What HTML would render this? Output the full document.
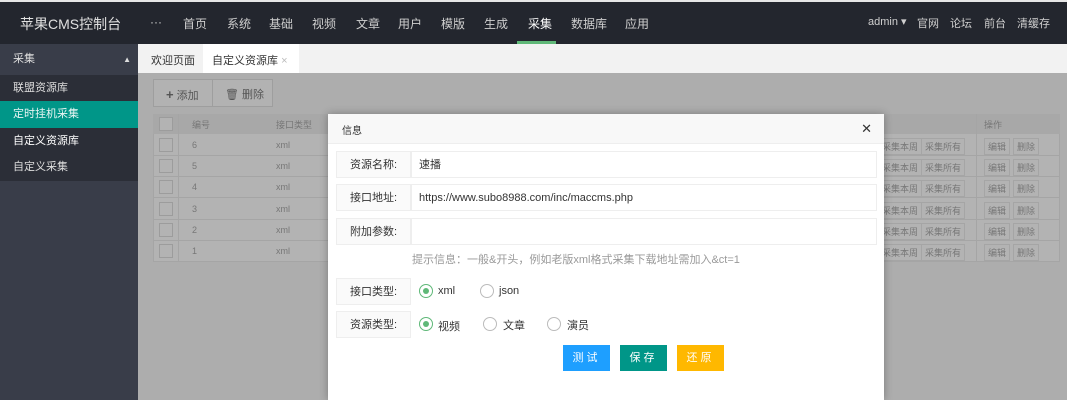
<!DOCTYPE html>
<html><head><meta charset="utf-8"><style>
*{margin:0;padding:0;box-sizing:border-box}
body{width:1067px;height:400px;overflow:hidden;position:relative;font-family:"Liberation Sans","Noto Sans CJK SC",sans-serif;font-size:12px;background:#adadad}
.abs{position:absolute}
.top{left:0;top:0;width:1067px;height:44px;background:#23262e;border-top:2px solid #e6e6e6;color:#ddd}
.top span{position:absolute;top:13px;font-size:12px;color:#cfcfcf;white-space:nowrap}
.side{left:0;top:44px;width:138px;height:356px;background:#393d49}
.si{position:absolute;left:0;width:138px;height:26.5px;line-height:26px;padding-left:13px;color:#ddd;font-size:11px;background:#2b2e37}
.tabs{left:138px;top:44px;width:929px;height:29px;background:#f2f2f2}
.cell{position:absolute;color:#777;font-size:9px}
.dlg{left:328px;top:114px;width:556px;height:286px;background:#fff;box-shadow:0 0 8px rgba(0,0,0,.3)}
.lab{position:absolute;left:8px;width:75px;height:27px;border:1px solid #eee;background:#fafafa;text-align:center;line-height:26px;color:#333;font-size:11px}
.inp{position:absolute;left:83px;width:466px;height:27px;border:1px solid #eee;line-height:26px;padding-left:7px;color:#333;font-size:11px}
.rad{position:absolute;width:14px;height:14px;border:1px solid #bbb;border-radius:50%}
.rad.on{border-color:#5fb878}
.rad.on:after{content:"";position:absolute;left:3px;top:3px;width:6px;height:6px;border-radius:50%;background:#5fb878}
.btn{position:absolute;top:231px;width:47px;height:26px;color:#fff;text-align:center;line-height:26px;letter-spacing:3px;font-size:11px}
.t{position:absolute;color:#333;font-size:11px}
</style></head><body>
<div class="abs top">
<span style="left:20px;font-size:14px;top:12px;color:#e0e0e0">苹果CMS控制台</span>
<span style="left:150px">···</span>
<span style="left:183px">首页</span><span style="left:227px">系统</span><span style="left:269px">基础</span><span style="left:312px">视频</span><span style="left:356px">文章</span><span style="left:398px">用户</span><span style="left:441px">模版</span><span style="left:484px">生成</span><span style="left:528px;color:#fff">采集</span><span style="left:571px">数据库</span><span style="left:625px">应用</span>
<div class="abs" style="left:517px;top:39px;width:39px;height:3px;background:#5fb878"></div>
<span style="left:868px;font-size:11px">admin ▾</span><span style="left:917px;font-size:11px">官网</span><span style="left:950px;font-size:11px">论坛</span><span style="left:984px;font-size:11px">前台</span><span style="left:1017px;font-size:11px">清缓存</span>
</div>
<div class="abs side">
<div class="si" style="top:0;height:31px;line-height:31px;background:#393d49">采集<span style="position:absolute;right:7px;font-size:8px">▲</span></div>
<div class="si" style="top:31px">联盟资源库</div>
<div class="si" style="top:57px;background:#009688;color:#e8f5f3">定时挂机采集</div>
<div class="si" style="top:84px;color:#fff">自定义资源库</div>
<div class="si" style="top:110px">自定义采集</div>
</div>
<div class="abs tabs"><span class="abs" style="left:13px;top:8px;font-size:11px;color:#333">欢迎页面</span>
<div class="abs" style="left:65px;top:0;width:96px;height:29px;background:#fff"><span class="abs" style="left:9px;top:8px;font-size:11px;color:#333">自定义资源库 <span style="color:#bbb">×</span></span></div></div>
<div class="abs" style="left:145px;top:73px;width:922px;height:327px;background:#adadad"></div>
<div class="abs" style="left:153px;top:79px;width:120px;height:28px;border:1px solid #9e9e9e;background:#b2b2b2;color:#555;font-size:11px"><span class="abs" style="left:12px;top:7px"><b style="font-size:13px">+</b> 添加</span><span class="abs" style="left:58px;top:0;height:26px;border-left:1px solid #9e9e9e;padding:6px 0 0 12px">🗑 删除</span></div>
<div class="abs" style="left:153px;top:114px;width:907px;height:148px;border:1px solid #a5a5a5;background:#b3b3b3"></div>
<div class="abs" style="left:153px;top:114px;width:907px;height:20px;background:#a8a8a8"></div>
<div class="cell" style="left:192px;top:118px">编号</div><div class="cell" style="left:276px;top:118px">接口类型</div><div class="cell" style="left:984px;top:118px">操作</div>
<div class="abs" style="left:178px;top:114px;width:1px;height:148px;background:#a5a5a5"></div>
<div class="abs" style="left:976px;top:114px;width:1px;height:148px;background:#a5a5a5"></div>
<div class="abs" style="left:159px;top:117px;width:14px;height:14px;border:1px solid #9c9c9c;background:#b3b3b3"></div>
<div id="rows"></div>
<script>
var h='';for(var i=0;i<6;i++){var y=135+i*21.2;h+='<div class="abs" style="left:153px;top:'+(y+20)+'px;width:907px;height:1px;background:#a5a5a5"></div><div class="abs" style="left:159px;top:'+(y+3)+'px;width:14px;height:14px;border:1px solid #9c9c9c"></div><div class="cell" style="left:192px;top:'+(y+5)+'px">'+(6-i)+'</div><div class="cell" style="left:276px;top:'+(y+5)+'px">xml</div>';
['采集本周','采集所有','编辑','删除'].forEach(function(t,j){var x=[878,921,984,1013][j];h+='<div class="cell" style="left:'+x+'px;top:'+(y+3)+'px;border:1px solid #a5a5a5;padding:1px 3px;font-size:9px">'+t+'</div>'});}
document.getElementById('rows').innerHTML=h;
</script>
<div class="abs dlg">
<div class="abs" style="left:0;top:0;width:556px;height:30px;background:#f8f8f8;border-bottom:1px solid #eee"><span class="abs" style="left:14px;top:8px;font-size:10px;color:#333">信息</span><span class="abs" style="right:12px;top:7px;font-size:13px;color:#333">✕</span></div>
<div class="lab" style="top:37px">资源名称:</div><div class="inp" style="top:37px">速播</div>
<div class="lab" style="top:70px">接口地址:</div><div class="inp" style="top:70px">https://www.subo8988.com/inc/maccms.php</div>
<div class="lab" style="top:104px">附加参数:</div><div class="inp" style="top:104px"></div>
<div class="abs" style="left:84px;top:137px;color:#999;font-size:11px">提示信息：一般&amp;开头，例如老版xml格式采集下载地址需加入&amp;ct=1</div>
<div class="lab" style="top:164px">接口类型:</div>
<div class="rad on" style="left:91px;top:170px"></div><span class="t" style="left:110px;top:171px">xml</span>
<div class="rad" style="left:152px;top:170px"></div><span class="t" style="left:171px;top:171px">json</span>
<div class="lab" style="top:197px">资源类型:</div>
<div class="rad on" style="left:91px;top:203px"></div><span class="t" style="left:110px;top:204px">视频</span>
<div class="rad" style="left:155px;top:203px"></div><span class="t" style="left:175px;top:203px">文章</span>
<div class="rad" style="left:219px;top:203px"></div><span class="t" style="left:239px;top:203px">演员</span>
<div class="btn" style="left:235px;background:#1e9fff">测试</div>
<div class="btn" style="left:292px;background:#009688">保存</div>
<div class="btn" style="left:349px;background:#ffb800">还原</div>
</div>
</body></html>
